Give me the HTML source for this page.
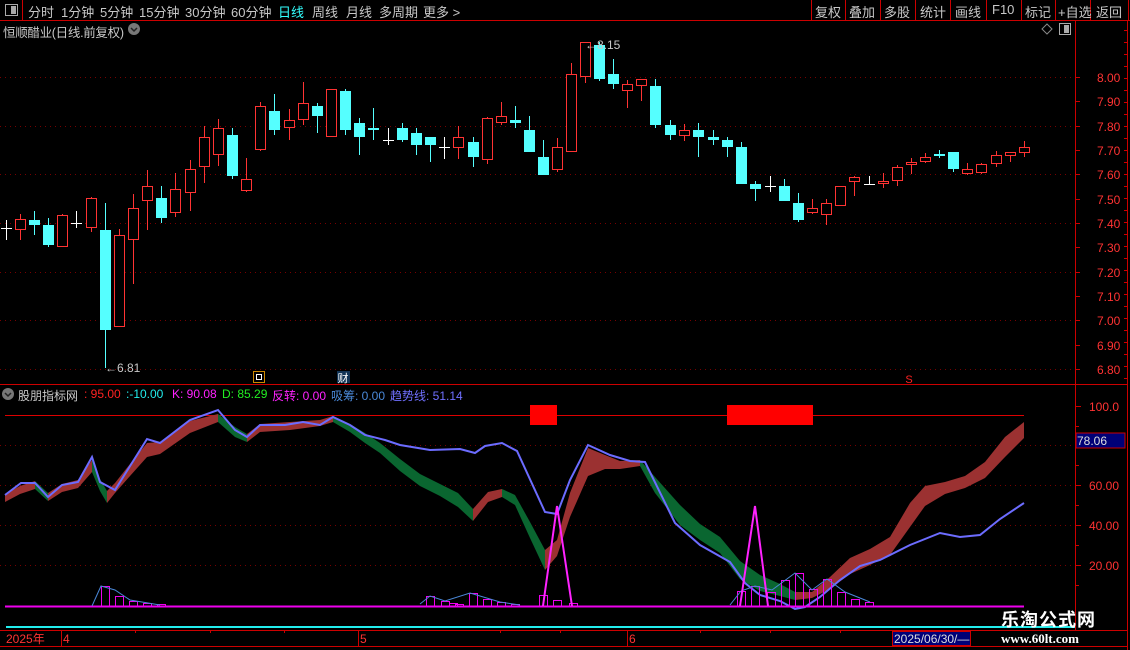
<!DOCTYPE html>
<html><head><meta charset="utf-8"><style>
*{margin:0;padding:0;box-sizing:border-box}
body{width:1130px;height:650px;background:#000;overflow:hidden;position:relative;font-family:"Liberation Sans","Noto Sans CJK SC",sans-serif;font-size:12px;color:#c8c8c8}
.t{position:absolute;white-space:nowrap}
</style></head><body>
<svg id="s" width="1130" height="650" style="position:absolute;left:0;top:0" xmlns="http://www.w3.org/2000/svg"></svg>

<div class="t" style="left:28px;top:2px;font-size:13px">分时</div>
<div class="t" style="left:61px;top:2px;font-size:13px">1分钟</div>
<div class="t" style="left:100px;top:2px;font-size:13px">5分钟</div>
<div class="t" style="left:139px;top:2px;font-size:13px">15分钟</div>
<div class="t" style="left:185px;top:2px;font-size:13px">30分钟</div>
<div class="t" style="left:231px;top:2px;font-size:13px">60分钟</div>
<div class="t" style="left:278px;top:2px;font-size:13px;color:#3ff">日线</div>
<div class="t" style="left:312px;top:2px;font-size:13px">周线</div>
<div class="t" style="left:346px;top:2px;font-size:13px">月线</div>
<div class="t" style="left:379px;top:2px;font-size:13px">多周期</div>
<div class="t" style="left:423px;top:2px;font-size:13px">更多 &gt;</div>
<div class="t" style="left:815px;top:2px;font-size:13px">复权</div>
<div class="t" style="left:849px;top:2px;font-size:13px">叠加</div>
<div class="t" style="left:884px;top:2px;font-size:13px">多股</div>
<div class="t" style="left:920px;top:2px;font-size:13px">统计</div>
<div class="t" style="left:955px;top:2px;font-size:13px">画线</div>
<div class="t" style="left:992px;top:2px;font-size:13px">F10</div>
<div class="t" style="left:1025px;top:2px;font-size:13px">标记</div>
<div class="t" style="left:1058px;top:2px;font-size:13px">+自选</div>
<div class="t" style="left:1096px;top:2px;font-size:13px">返回</div>

<div class="t" style="left:3px;top:22px;font-size:12.5px;letter-spacing:-0.3px">恒顺醋业(日线.前复权)</div>
<div class="t" style="left:18px;top:387px">股朋指标网</div>
<div class="t" style="left:84px;top:387px;color:#f22">: 95.00</div>
<div class="t" style="left:126px;top:387px;color:#2ee">:-10.00</div>
<div class="t" style="left:172px;top:387px;color:#f2f">K: 90.08</div>
<div class="t" style="left:222px;top:387px;color:#2e2">D: 85.29</div>
<div class="t" style="left:272px;top:387px;color:#f2f">反转: 0.00</div>
<div class="t" style="left:331px;top:387px;color:#4a88d8">吸筹: 0.00</div>
<div class="t" style="left:390px;top:387px;color:#7070ff">趋势线: 51.14</div>

<div class="t" style="left:105px;top:361px">←6.81</div>
<div class="t" style="left:585px;top:38px">←8.15</div>

<div class="t" style="left:1001px;top:606px;font-size:18px;font-weight:bold;color:#fff;letter-spacing:1px">乐淘公式网</div>
<div class="t" style="left:1001px;top:631px;font-size:13px;font-weight:bold;color:#fff;font-family:'Liberation Serif',serif">www.60lt.com</div>

<script>
var s=document.getElementById('s'),h='';
function L(x1,y1,x2,y2,c,w,d){h+='<line x1="'+x1+'" y1="'+y1+'" x2="'+x2+'" y2="'+y2+'" stroke="'+c+'" stroke-width="'+(w||1)+'"'+(d?' stroke-dasharray="'+d+'"':'')+'/>';}
function R(x,y,w,hh,f,st){h+='<rect x="'+x+'" y="'+y+'" width="'+w+'" height="'+hh+'" fill="'+(f||'none')+'"'+(st?' stroke="'+st+'"':'')+'/>';}
function T(x,y,t,c,sz,a){h+='<text x="'+x+'" y="'+y+'" fill="'+c+'" font-size="'+(sz||12)+'" font-family="Liberation Sans,sans-serif"'+(a?' text-anchor="'+a+'"':'')+'>'+t+'</text>';}
L(0,20.5,1130,20.5,'#c00');
L(22.5,0,22.5,20,'#c00');
[811,845,880,915,950,986,1021,1055,1090,1128].forEach(function(x){L(x+.5,0,x+.5,20,'#c00')});
R(5.5,4.5,12,11,'none','#aaa');R(11,6,5,8,'#aaa');
h+='<circle cx="134" cy="29" r="6" fill="#777"/><path d="M131 28l3 3 3-3" stroke="#222" fill="none" stroke-width="1.5"/>';
h+='<circle cx="8" cy="394" r="6" fill="#777"/><path d="M5 393l3 3 3-3" stroke="#222" fill="none" stroke-width="1.5"/>';
h+='<path d="M1047 24l5 5-5 5-5-5z" stroke="#888" fill="none"/>';R(1059.5,23.5,11,11,'none','#aaa');R(1064,25,5,8,'#aaa');
L(1075.5,20,1075.5,630,'#c00');L(1127.5,20,1127.5,650,'#c00');
L(0,384.5,1128,384.5,'#c00');
var prices=[8.0,7.9,7.8,7.7,7.6,7.5,7.4,7.3,7.2,7.1,7.0,6.9,6.8];
prices.forEach(function(p){var y=Math.round(77+(8-p)*243.3);
 if(Math.round(p*10)%2==0)L(0,y+.5,1075,y+.5,'#700','1','1 4');
 L(1075,y+.5,1080,y+.5,'#c00');T(1097,y+5,p.toFixed(2),'#f33',12);});
for(var y=30;y<380;y+=12){L(1124,y+.5,1127,y+.5,'#c00');}
var C=[[6,'w',228,228,220,240],[20,'r',219,230,214,240],[34,'c',220,225,211,235],[48,'c',225,245,218,247],[62,'r',215,247,214,247],[76,'w',223,223,211,228],[91,'r',198,228,197,232],[105,'c',230,330,203,368],[119,'r',235,327,229,327],[133,'r',208,240,194,284],[147,'r',186,201,170,230],[161,'c',198,218,186,223],[175,'r',189,213,173,217],[190,'r',169,193,160,211],[204,'r',137,167,126,183],[218,'r',128,155,119,166],[232,'c',135,176,128,179],[246,'r',179,191,158,192],[260,'r',106,150,102,151],[274,'c',111,130,94,135],[289,'r',120,128,109,140],[303,'r',103,120,82,125],[317,'c',106,116,103,133],[331,'r',89,137,89,137],[345,'c',91,130,89,135],[359,'c',123,137,118,155],[373,'c',128,130,108,140],[388,'w',140,140,128,145],[402,'c',128,140,123,142],[416,'c',133,145,128,155],[430,'c',137,145,137,162],[444,'w',147,147,137,159],[458,'r',137,148,126,159],[473,'c',142,157,137,167],[487,'r',118,160,117,164],[501,'r',116,123,102,125],[515,'c',120,123,106,128],[529,'c',130,152,116,152],[543,'c',157,175,140,175],[557,'r',147,170,138,172],[571,'r',74,152,63,152],[585,'r',42,77,42,83],[599,'c',45,79,42,81],[613,'c',74,84,59,89],[627,'r',84,91,80,108],[641,'r',79,86,79,101],[655,'c',86,125,79,128],[670,'c',125,135,120,140],[684,'r',130,136,124,141],[698,'c',130,137,123,157],[713,'c',137,140,130,145],[727,'c',140,147,137,157],[741,'c',147,184,142,184],[755,'c',184,189,181,201],[770,'w',186,186,176,192],[784,'c',186,201,179,201],[798,'c',203,220,193,222],[812,'r',208,213,199,214],[826,'r',203,215,199,225],[840,'r',186,206,186,206],[854,'r',177,182,176,196],[869,'w',184,184,176,185],[883,'r',181,184,173,188],[897,'r',167,181,165,186],[911,'r',162,165,158,174],[925,'r',157,162,153,163],[939,'c',154,156,150,158],[953,'c',152,169,152,172],[967,'r',169,174,163,175],[981,'r',164,173,163,174],[996,'r',155,164,151,167],[1010,'r',152,156,152,162],[1024,'r',147,153,141,157]];
C.forEach(function(c){var x=c[0],t=c[1];
 if(t=='w'){L(x+.5,c[4],x+.5,c[5],'#fff');L(x-5,c[2]+.5,x+6,c[2]+.5,'#fff');return;}
 var col=t=='r'?'#f33':'#5ff';
 L(x+.5,c[4],x+.5,c[5],col);
 if(t=='r'){R(x-4.5,c[2]+.5,10,Math.max(c[3]-c[2]-1,2),'#000',col);}
 else R(x-5,c[2],11,Math.max(c[3]-c[2],2),col);
});
R(253.5,371.5,11,11,'#000','#c80');R(256.5,374.5,5,5,'none','#fff');
R(337,371,13,12,'#135');T(343,382,'财','#fff',11,'middle');
T(909,383,'S','#f22',11,'middle');
[445,485,525,565].forEach(function(g){L(0,g+.5,1075,g+.5,'#700',1,'1 4')});
L(5,415.5,1024,415.5,'#d00');
[[406,'100.0'],[485,'60.00'],[525,'40.00'],[565,'20.00']].forEach(function(a){L(1075,a[0]+.5,1081,a[0]+.5,'#c00');T(1089,a[0]+5,a[1],'#f33',12)});
[426,446,465,505,545,585].forEach(function(y){L(1075,y+.5,1079,y+.5,'#c00')});
R(1076,433,49,15,'#007','#c00');T(1077,445,'78.06','#ddd',12);
R(530,405,27,20,'#f00');R(727,405,86,20,'#f00');
var B=[[5,498,4],[20,490,4],[35,485,4],[48,497,4],[62,488,4],[78,484,4],[92,466,6],[100,485,6],[107,497,6],[115,488,5],[130,470,6],[147,450,7],[160,448,6],[190,427,6],[218,418,4],[235,432,5],[247,438,4],[260,428,4],[290,426,4],[320,423,3],[333,419,3],[350,428,4],[365,438,5],[380,448,5],[400,465,6],[420,480,6],[440,490,6],[458,500,7],[473,515,6],[488,497,5],[502,493,4],[515,500,5],[530,530,8],[545,560,10],[557,548,8],[570,505,12],[588,462,14],[605,462,7],[620,465,4],[640,463,3],[655,485,8],[680,515,10],[700,532,8],[720,545,8],[740,570,9],[760,583,8],[780,590,6],[795,596,4],[812,595,3],[830,583,6],[850,566,8],[870,557,8],[890,546,9],[910,515,12],[925,496,10],[945,488,6],[965,482,6],[985,470,8],[1005,447,10],[1024,430,8]];
for(var i=0;i<B.length-1;i++){var a=B[i],b=B[i+1];var red=b[1]<a[1];if(a[0]>=545&&a[0]<640)red=true;var col=red?'#9b3131':'#0a6630';
 h+='<polygon points="'+a[0]+','+(a[1]-a[2])+' '+b[0]+','+(b[1]-b[2])+' '+b[0]+','+(b[1]+b[2])+' '+a[0]+','+(a[1]+a[2])+'" fill="'+col+'"/>';}
var P=[[5,495],[21,483],[35,483],[48,497],[62,485],[78,482],[92,457],[100,482],[115,490],[147,439],[160,443],[190,420],[218,410],[235,430],[247,437],[260,425],[285,425],[303,422],[320,425],[333,417],[350,425],[365,435],[385,440],[400,445],[430,450],[460,449],[475,453],[485,446],[502,443],[517,451],[545,512],[557,514],[570,480],[588,445],[610,455],[630,461],[645,462],[675,523],[700,545],[730,562],[745,583],[760,595],[780,601],[795,609],[805,607],[820,597],[840,580],[860,566],[880,560],[910,545],[940,533],[960,537],[980,535],[1000,519],[1024,503]];
h+='<polyline points="'+P.map(function(p){return p.join(',')}).join(' ')+'" fill="none" stroke="#6c6cff" stroke-width="2"/>';
var H=[[101,586],[115,596],[129,601],[143,603],[157,604],[426,596],[441,601],[449,603],[455,604],[469,593],[483,599],[497,602],[511,604],[539,595],[553,600],[569,603],[737,591],[751,586],[767,592],[781,580],[795,573],[809,589],[823,579],[837,592],[851,599],[865,602]];
H.forEach(function(b){R(b[0]+.5,b[1]+.5,8,606-b[1],'none','#e0e');});
L(5,606.5,1024,606.5,'#e0e',2);
h+='<polyline points="92,606 101,586 115,590 130,600 160,605" fill="none" stroke="#4a88d8"/>';
h+='<polyline points="420,604 430,596 445,601 470,593 500,602 520,605" fill="none" stroke="#4a88d8"/>';
h+='<polyline points="730,605 741,591 755,586 772,590 795,573 812,590 827,579 845,592 870,602" fill="none" stroke="#4a88d8"/>';
h+='<polyline points="543,606 557,506 572,606" fill="none" stroke="#f2f" stroke-width="2"/>';
h+='<polyline points="740,606 755,506 768,606" fill="none" stroke="#f2f" stroke-width="2"/>';
L(6,627,1075,627,'#2ee',2);
L(0,630.5,1128,630.5,'#c00');L(0,646.5,1128,646.5,'#c00');
[61,358,627].forEach(function(x){L(x+.5,630,x+.5,646,'#c00')});
[135,210,284,500,560,700,770,840].forEach(function(x){L(x+.5,630,x+.5,633,'#c00')});
T(6,643,'2025年','#f33',12);T(63,643,'4','#f33',12);T(360,643,'5','#f33',12);T(629,643,'6','#f33',12);
R(892.5,631.5,78,14,'#007','#c00');T(894,643,'2025/06/30/—','#ddd',12);
s.innerHTML=h;
</script>
</body></html>
